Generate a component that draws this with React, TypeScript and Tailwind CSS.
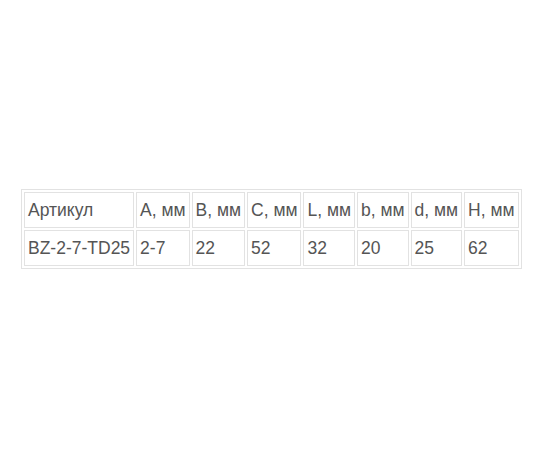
const HEAD = ["Артикул", "A, мм", "B, мм", "C, мм", "L, мм", "b, мм", "d, мм", "H, мм"];
const ROW = ["BZ-2-7-TD25", "2-7", "22", "52", "32", "20", "25", "62"];

export default function App() {
  return (
    <div className="h-[450px] w-[550px] bg-white pl-[21px] pt-[189px]" style={{ fontFamily: '"Liberation Sans", Arial, sans-serif' }}>
      <table className="border-separate border-spacing-[2px] border border-[#e2e2e2] text-[17.5px] text-[#555]">
        <tbody>
          <tr>
            {HEAD.map(h => (
              <td key={h} className="h-[36px] border border-[#e2e2e2] px-[3px] align-middle whitespace-nowrap">
                {h}
              </td>
            ))}
          </tr>
          <tr>
            {ROW.map((c, i) => (
              <td key={i} className="h-[36px] border border-[#e2e2e2] px-[3px] align-middle whitespace-nowrap">
                {c}
              </td>
            ))}
          </tr>
        </tbody>
      </table>
    </div>
  );
}
